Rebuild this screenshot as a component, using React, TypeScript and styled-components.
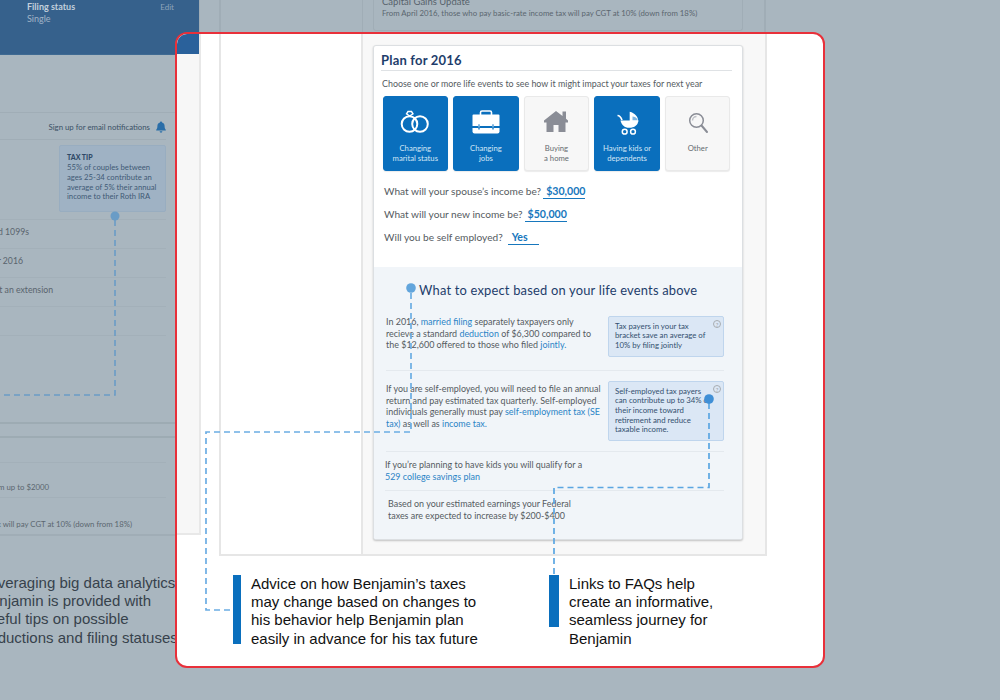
import React from "react";
import styled, { createGlobalStyle } from "styled-components";

const GlobalStyle = createGlobalStyle`
  html, body {
    margin: 0;
    padding: 0;
    background: #a9b6bf;
  }
  * {
    box-sizing: border-box;
  }
`;

const APP_FONT = `Lato, "Noto Sans", sans-serif`;
const SLIDE_FONT = `"Liberation Sans", Arial, sans-serif`;

function Rings() {
  return (
    <svg width="30" height="26" viewBox="0 0 30 26" fill="none" stroke="#fff">
      <circle cx="9.5" cy="14" r="7.8" strokeWidth="2" />
      <circle cx="20" cy="14" r="7.8" strokeWidth="2" />
      <path d="M6.5 3.8 L8 1.5 H11.5 L13 3.8 L9.7 6 Z" strokeWidth="1.4" />
    </svg>
  );
}

function Briefcase() {
  return (
    <svg width="30" height="26" viewBox="0 1 30 26">
      <path d="M9.5 6V3.5A1.5 1.5 0 0 1 11 2h8a1.5 1.5 0 0 1 1.5 1.5V6" fill="none" stroke="#fff" strokeWidth="1.6" />
      <path d="M2.5 5.5h25a1 1 0 0 1 1 1v10.5H1.5V6.5a1 1 0 0 1 1-1Z" fill="#fff" />
      <path d="M1.5 19h27v3.5a2 2 0 0 1-2 2h-23a2 2 0 0 1-2-2Z" fill="#fff" />
      <path d="M8 15.5v5M22 15.5v5" stroke="#0a6fbd" strokeWidth="1.3" />
      <path d="M8 15.5v3M22 15.5v3" stroke="#8fc0e6" strokeWidth="1.3" />
    </svg>
  );
}

function House() {
  return (
    <svg width="30" height="26" viewBox="0 2 30 26">
      <path
        d="M15 3 L21.5 8 V3.5 H25 V10.7 L27 12.5 V14.5 H24.5 V24 H17.5 V17 H12.5 V24 H5.5 V14.5 H3 V12.5 Z"
        fill="#8a8d96"
      />
    </svg>
  );
}

function Stroller() {
  return (
    <svg width="30" height="26" viewBox="0 0 30 26" fill="none">
      <path d="M5.5 5.5 C8 5.5 9 7.5 10 10" stroke="#fff" strokeWidth="1.7" />
      <path d="M17.7 1.7 C23 3 26.3 7 26.3 11.5 H17.7 Z" fill="#fff" />
      <path d="M20.5 6.5 C22.5 6.5 24.5 7.8 25.5 9.5 L25.8 10.6 H20.5 Z" fill="#7fb6e2" />
      <path d="M8.5 10.5 H26.3 C26.3 15 22.5 17.8 17 17.8 C12.5 17.8 9.5 15 8.5 10.5 Z" fill="#fff" />
      <circle cx="12.7" cy="21.7" r="2.4" stroke="#fff" strokeWidth="1.5" />
      <circle cx="21" cy="21.7" r="2.4" stroke="#fff" strokeWidth="1.5" />
    </svg>
  );
}

function Magnifier() {
  return (
    <svg width="30" height="26" viewBox="0 0 30 26" fill="none">
      <circle cx="13.5" cy="10.5" r="6.8" stroke="#8a8d96" strokeWidth="1.5" />
      <path d="M9.5 10.5a4 4 0 0 1 4-4" stroke="#bcbfc5" strokeWidth="1.5" />
      <path d="M18.5 15.5 L24 22" stroke="#8a8d96" strokeWidth="2" strokeLinecap="round" />
    </svg>
  );
}

function Bell() {
  return (
    <svg width="10" height="12" viewBox="0 0 10 12">
      <path d="M5 0.5c.6 0 1 .4 1 1 1.7.4 2.6 1.8 2.6 3.6 0 2 .4 2.8 1.2 3.7v.7H.2v-.7C1 7.9 1.4 7.1 1.4 5.1c0-1.8.9-3.2 2.6-3.6 0-.6.4-1 1-1Z" fill="#2a6ea8" />
      <path d="M3.6 10.3h2.8a1.4 1.4 0 0 1-2.8 0Z" fill="#2a6ea8" />
    </svg>
  );
}

function Connectors() {
  return (
    <ConnectorSvg width="1000" height="700" viewBox="0 0 1000 700" fill="none">
      <path d="M115 220V395H0" stroke="#6a9cc6" strokeWidth="1.6" strokeDasharray="6 4" />
      <circle cx="115" cy="216" r="4.5" fill="#6a9cc6" />
      <path d="M411 293V432H206V610H233" stroke="#6badE3" strokeWidth="1.7" strokeDasharray="6 4" />
      <circle cx="411" cy="288" r="4.8" fill="#62a5dc" />
      <path d="M709 403V487.5H554V575" stroke="#5ba6e2" strokeWidth="1.7" strokeDasharray="6 4" />
      <circle cx="709" cy="399" r="4.8" fill="#3f8fd6" />
    </ConnectorSvg>
  );
}

const tiles = [
  { label: ["Changing", "marital status"], active: true, icon: <Rings /> },
  { label: ["Changing", "jobs"], active: true, icon: <Briefcase /> },
  { label: ["Buying", "a home"], active: false, icon: <House /> },
  { label: ["Having kids or", "dependents"], active: true, icon: <Stroller /> },
  { label: ["Other"], active: false, icon: <Magnifier /> },
];

const questions = [
  { text: "What will your spouse\u2019s income be?", value: "$30,000" },
  { text: "What will your new income be?", value: "$50,000" },
  { text: "Will you be self employed?", value: "Yes", wide: true },
];

const dimRows = [
  { text: "Gather your W-2s and 1099s", inset: 137 },
  { text: "Review your income for 2016", inset: 143 },
  { text: "Decide whether to request an extension", inset: 113 },
  { text: "", inset: 0 },
  { text: "", inset: 0 },
];

export default function App() {
  return (
    <Page>
      <GlobalStyle />

      <Backdrop>
        <DimColumn>
          <DimPanel>
            <DimHeader>
              <DimHeaderText>
                <DimStatusTitle>Filing status</DimStatusTitle>
                <DimStatusValue>Single</DimStatusValue>
              </DimHeaderText>
              <DimEdit>Edit</DimEdit>
            </DimHeader>

            <DimCard>
              <DimNotify>
                Sign up for email notifications
                <Bell />
              </DimNotify>
              <DimTipRow>
                <DimTip>
                  <DimTipTitle>TAX TIP</DimTipTitle>
                  55% of couples between ages 25-34 contribute an average of 5%
                  their annual income to their Roth IRA
                </DimTip>
              </DimTipRow>
              {dimRows.map((row, i) => (
                <DimRow key={i} $inset={row.inset}>
                  <span>{row.text}</span>
                </DimRow>
              ))}
            </DimCard>

            <DimCardLower>
              <DimLowerRow $inset={0} $height={25} $bottom={5} />
              <DimLowerRow $inset={117} $height={35} $bottom={4}>
                <span>Contribute to your Roth IRA from up to $2000</span>
              </DimLowerRow>
              <DimLowerRow $inset={34} $height={38} $bottom={6} $last>
                <span>From April 2016, those who pay basic-rate tax will pay CGT at 10% (down from 18%)</span>
              </DimLowerRow>
            </DimCardLower>
          </DimPanel>

          <DimParagraph>
            Leveraging big data analytics,
            <br />
            Benjamin is provided with
            <br />
            useful tips on possible
            <br />
            deductions and filing statuses
          </DimParagraph>
        </DimColumn>

        <DimFrame>
          <DimFrameSide />
          <DimFrameMain>
            <DimUpdateCard>
              <DimUpdateTitle>Capital Gains Update</DimUpdateTitle>
              <DimUpdateText>
                From April 2016, those who pay basic-rate income tax will pay CGT at 10% (down from 18%)
              </DimUpdateText>
            </DimUpdateCard>
          </DimFrameMain>
        </DimFrame>
      </Backdrop>

      <Spotlight>
        <SpotlightTop>
          <LeftStrip>
            <StripHeader />
          </LeftStrip>

          <Frame>
            <FrameSide />
            <FrameMain>
              <Card>
                <PlanSection>
                  <PlanTitle>Plan for 2016</PlanTitle>
                  <PlanIntro>
                    Choose one or more life events to see how it might impact your taxes for next year
                  </PlanIntro>

                  <TileRow>
                    {tiles.map((tile) => (
                      <Tile key={tile.label.join(" ")} $active={tile.active}>
                        {tile.icon}
                        <TileLabel>
                          {tile.label.map((line) => (
                            <div key={line}>{line}</div>
                          ))}
                        </TileLabel>
                      </Tile>
                    ))}
                  </TileRow>

                  <QuestionList>
                    {questions.map((q) => (
                      <Question key={q.text}>
                        {q.text}
                        <Answer $wide={q.wide}>{q.value}</Answer>
                      </Question>
                    ))}
                  </QuestionList>
                </PlanSection>

                <ExpectSection>
                  <ExpectTitle>What to expect based on your life events above</ExpectTitle>

                  <ExpectRow $height={72} $top={17}>
                    <ExpectText>
                      In 2016, <InlineLink>married filing</InlineLink> separately taxpayers only
                      <br />
                      recieve a standard <InlineLink>deduction</InlineLink> of $6,300 compared to
                      <br />
                      the $12,600 offered to those who filed <InlineLink>jointly.</InlineLink>
                    </ExpectText>
                    <TipBox $height={41}>
                      <HelpGlyph>?</HelpGlyph>
                      Tax payers in your tax
                      <br />
                      bracket save an average of
                      <br />
                      10% by filing jointly
                    </TipBox>
                  </ExpectRow>

                  <ExpectRow $height={81} $top={10}>
                    <ExpectText $offset={2}>
                      If you are self-employed, you will need to file an annual
                      <br />
                      return and pay estimated tax quarterly. Self-employed
                      <br />
                      individuals generally must pay{" "}
                      <InlineLink>
                        self-employment tax (SE
                        <br />
                        tax)
                      </InlineLink>{" "}
                      as well as <InlineLink>income tax.</InlineLink>
                    </ExpectText>
                    <TipBox $height={60}>
                      <HelpGlyph>?</HelpGlyph>
                      Self-employed tax payers
                      <br />
                      can contribute up to 34% of
                      <br />
                      their income toward
                      <br />
                      retirement and reduce
                      <br />
                      taxable income.
                    </TipBox>
                  </ExpectRow>

                  <PlainRow>
                    If you&rsquo;re planning to have kids you will qualify for a
                    <br />
                    <InlineLink>529 college savings plan</InlineLink>
                  </PlainRow>

                  <EstimateText>
                    Based on your estimated earnings your Federal
                    <br />
                    taxes are expected to increase by $200-$400
                  </EstimateText>
                </ExpectSection>
              </Card>
            </FrameMain>
          </Frame>
        </SpotlightTop>

        <Notes>
          <Note>
            <NoteBar $height={69} $width={8} />
            <NoteText>
              Advice on how Benjamin&rsquo;s taxes
              <br />
              may change based on changes to
              <br />
              his behavior help Benjamin plan
              <br />
              easily in advance for his tax future
            </NoteText>
          </Note>
          <Note>
            <NoteBar $height={52} $width={10} />
            <NoteText>
              Links to FAQs help
              <br />
              create an informative,
              <br />
              seamless journey for
              <br />
              Benjamin
            </NoteText>
          </Note>
        </Notes>
      </Spotlight>

      <Connectors />
    </Page>
  );
}

const Page = styled.div`
  position: relative;
  width: 1000px;
  height: 700px;
  overflow: hidden;
  background: #a9b6bf;
  font-family: ${APP_FONT};
`;

const Backdrop = styled.div`
  display: flex;
  height: 100%;
`;

const DimColumn = styled.div`
  width: 200px;
  flex-shrink: 0;
`;

const DimPanel = styled.div`
  height: 536px;
  border-right: 1px solid #a0adb6;
  border-bottom: 2px solid #a0adb6;
`;

const DimHeader = styled.div`
  display: flex;
  justify-content: space-between;
  height: 55px;
  padding: 1px 25px 0 27px;
  background: #36618c;
  border-bottom: 1px solid #3f6a92;
`;

const DimHeaderText = styled.div`
  display: flex;
  flex-direction: column;
`;

const DimStatusTitle = styled.div`
  font-size: 9px;
  font-weight: 700;
  line-height: 12px;
  color: #c3d0dc;
`;

const DimStatusValue = styled.div`
  font-size: 9px;
  line-height: 12px;
  color: #a1b4c7;
`;

const DimEdit = styled.div`
  font-size: 8px;
  line-height: 12px;
  color: #8da4ba;
`;

const DimCard = styled.div`
  height: 312px;
  margin-top: 57px;
  padding-right: 33px;
  border-top: 1px solid #a0adb6;
  border-bottom: 2px solid #9dabb3;
`;

const DimNotify = styled.div`
  display: flex;
  justify-content: flex-end;
  align-items: center;
  gap: 6px;
  height: 27px;
  padding-top: 2px;
  font-size: 7.8px;
  color: #3b5166;
  border-bottom: 1px solid #a0adb6;
`;

const DimTipRow = styled.div`
  display: flex;
  justify-content: flex-end;
  height: 80px;
  padding-top: 5px;
  border-bottom: 1px solid #a3b0b9;
`;

const DimTip = styled.div`
  width: 107px;
  height: 67px;
  padding: 6px 7px;
  font-size: 7.7px;
  line-height: 9.8px;
  color: #3f5a76;
  background: #9fb2c4;
  border: 1px solid #98adc0;
  border-radius: 2px;
`;

const DimTipTitle = styled.div`
  font-weight: 900;
  font-size: 7px;
  line-height: 11px;
  color: #2f4a68;
`;

const DimRow = styled.div<{ $inset: number }>`
  display: flex;
  justify-content: flex-end;
  height: 29px;
  padding-right: ${(p) => p.$inset}px;
  padding-top: 5px;
  font-size: 8.7px;
  line-height: 14px;
  color: #59646d;
  white-space: nowrap;
  border-bottom: 1px solid #a3b0b9;

  &:last-child {
    border-bottom: none;
  }
`;

const DimCardLower = styled.div`
  margin-top: 12px;
  padding-right: 33px;
  border-top: 2px solid #9dabb3;
`;

const DimLowerRow = styled.div<{ $inset: number; $height: number; $bottom: number; $last?: boolean }>`
  display: flex;
  justify-content: flex-end;
  align-items: flex-end;
  height: ${(p) => p.$height}px;
  padding-right: ${(p) => p.$inset}px;
  padding-bottom: ${(p) => p.$bottom}px;
  font-size: 7.8px;
  line-height: 12px;
  color: #5b666f;
  white-space: nowrap;
  border-bottom: ${(p) => (p.$last ? "none" : "1px solid #a3b0b9")};
`;

const DimParagraph = styled.div`
  margin: 38px 0 0 -19px;
  font-family: ${SLIDE_FONT};
  font-size: 15px;
  line-height: 18.2px;
  color: #37424c;
  white-space: nowrap;
`;

const DimFrame = styled.div`
  display: flex;
  width: 547px;
  height: 32px;
  margin-left: 19px;
  border-left: 2px solid #a0adb6;
  border-right: 2px solid #a0adb6;
`;

const DimFrameSide = styled.div`
  width: 142px;
  border-right: 1px solid #a0adb6;
`;

const DimFrameMain = styled.div`
  flex: 1;
  padding-left: 10px;
`;

const DimUpdateCard = styled.div`
  display: flex;
  flex-direction: column;
  justify-content: flex-end;
  width: 370px;
  height: 31px;
  padding: 0 0 11px 8px;
  border: 1px solid #a0adb6;
  border-top: none;
  border-radius: 0 0 3px 3px;
`;

const DimUpdateTitle = styled.div`
  font-size: 9.5px;
  line-height: 12px;
  color: #57626b;
`;

const DimUpdateText = styled.div`
  font-size: 7.8px;
  line-height: 11px;
  color: #5b666f;
  white-space: nowrap;
`;

/* white cut-out with the red outline, sits over the dimmed slide */
const Spotlight = styled.div`
  position: absolute;
  left: 175px;
  top: 32px;
  width: 650px;
  height: 636px;
  background: #fff;
  border: 2px solid #e8303a;
  border-radius: 12px;
  overflow: hidden;
`;

const SpotlightTop = styled.div`
  display: flex;
  align-items: flex-start;
`;

const LeftStrip = styled.div`
  width: 24px;
  height: 501px;
  flex-shrink: 0;
  background: #f7f7f7;
  border-right: 2px solid #e8e8e8;
  border-bottom: 2px solid #e8e8e8;
`;

const StripHeader = styled.div`
  height: 20px;
  background: #2a619b;
`;

const Frame = styled.div`
  display: flex;
  width: 548px;
  height: 522px;
  margin-left: 18px;
  border-left: 2px solid #e6e6e6;
  border-right: 2px solid #e6e6e6;
  border-bottom: 2px solid #e6e6e6;
`;

const FrameSide = styled.div`
  width: 142px;
  flex-shrink: 0;
  background: #fff;
  border-right: 2px solid #e6e6e6;
`;

const FrameMain = styled.div`
  flex: 1;
  padding: 11px 0 0 10px;
  background: #f8f8f8;
`;

const Card = styled.div`
  width: 370px;
  height: 495px;
  overflow: hidden;
  background: #fff;
  border: 1px solid #dcdfe2;
  border-radius: 3px;
  box-shadow: 0 1px 2px rgba(0, 0, 0, 0.22);
`;

const PlanSection = styled.div`
  height: 221px;
  padding: 5px 10px 0 7px;
`;

const PlanTitle = styled.div`
  height: 20px;
  font-size: 13px;
  font-weight: 700;
  line-height: 18px;
  letter-spacing: 0.2px;
  color: #1e3d6b;
  border-bottom: 1px solid #dfe2e5;
`;

const PlanIntro = styled.div`
  margin: 6px 0 0 1px;
  font-size: 8.9px;
  line-height: 13px;
  color: #555b61;
  white-space: nowrap;
`;

const TileRow = styled.div`
  display: flex;
  gap: 5px;
  margin: 6px 0 0 1.5px;
`;

const Tile = styled.div<{ $active: boolean }>`
  display: flex;
  flex-direction: column;
  align-items: center;
  width: 65.6px;
  height: 74.5px;
  padding-top: 12.5px;
  border-radius: 3px;
  background: ${(p) => (p.$active ? "#0a6fbd" : "#f7f7f7")};
  border: 1px solid ${(p) => (p.$active ? "#0a6fbd" : "#e9e9e9")};
  color: ${(p) => (p.$active ? "#d3e6f5" : "#666b70")};
  box-shadow: 0 1px 1px rgba(0, 0, 0, 0.08);
`;

const TileLabel = styled.div`
  margin-top: 7px;
  font-size: 7.7px;
  line-height: 10px;
  text-align: center;
  white-space: nowrap;
`;

const QuestionList = styled.div`
  display: flex;
  flex-direction: column;
  gap: 8px;
  margin: 13px 0 0 3px;
`;

const Question = styled.div`
  display: flex;
  gap: 2px;
  font-size: 10.15px;
  line-height: 14px;
  color: #555b61;
`;

const Answer = styled.span<{ $wide?: boolean }>`
  min-width: ${(p) => (p.$wide ? "31px" : "auto")};
  margin-left: ${(p) => (p.$wide ? "3px" : "0")};
  padding: 0 ${(p) => (p.$wide ? "9px" : "0")} 0 ${(p) => (p.$wide ? "4px" : "3px")};
  font-size: 10.6px;
  font-weight: 700;
  color: #1777bd;
  border-bottom: 1px solid #1777bd;
`;

const ExpectSection = styled.div`
  height: 274px;
  padding: 14px 18px 0 12px;
  background: #f1f5f9;
`;

const ExpectTitle = styled.div`
  margin-left: 33px;
  font-size: 12.9px;
  line-height: 18px;
  letter-spacing: 0.2px;
  color: #1e3d6b;
  white-space: nowrap;
`;

const ExpectRow = styled.div<{ $height: number; $top: number }>`
  display: flex;
  justify-content: space-between;
  align-items: flex-start;
  height: ${(p) => p.$height}px;
  padding-top: ${(p) => p.$top}px;
  border-bottom: 1px solid #e4e9ee;
`;

const ExpectText = styled.div<{ $offset?: number }>`
  margin-top: ${(p) => p.$offset ?? 0}px;
  font-size: 8.95px;
  line-height: 11.7px;
  color: #555b61;
  white-space: nowrap;
`;

const InlineLink = styled.span`
  color: #2b84c6;
`;

const TipBox = styled.div<{ $height: number }>`
  position: relative;
  width: 116px;
  height: ${(p) => p.$height}px;
  padding: 4.5px 0 0 6px;
  font-size: 7.8px;
  line-height: 9.7px;
  color: #33506f;
  white-space: nowrap;
  background: #dbe7f5;
  border: 1px solid #bfd5ed;
  border-radius: 2px;
`;

const HelpGlyph = styled.span`
  position: absolute;
  top: 3px;
  right: 2px;
  width: 8px;
  height: 8px;
  font-size: 6px;
  line-height: 7px;
  text-align: center;
  color: #9aa0a6;
  border: 1px solid #a8adb2;
  border-radius: 50%;
`;

const PlainRow = styled.div`
  height: 38.5px;
  margin-left: -1px;
  padding-top: 7px;
  font-size: 8.95px;
  line-height: 11.7px;
  color: #555b61;
  white-space: nowrap;
  border-bottom: 1px solid #e4e9ee;
`;

const EstimateText = styled.div`
  padding: 7.5px 0 0 2px;
  font-size: 8.95px;
  line-height: 11.7px;
  color: #555b61;
  white-space: nowrap;
`;

const Notes = styled.div`
  display: flex;
  margin-top: 19px;
  padding-left: 56px;
`;

const Note = styled.div`
  display: flex;
  gap: 10px;
  width: 316px;
  flex-shrink: 0;
`;

const NoteBar = styled.div<{ $height: number; $width: number }>`
  width: ${(p) => p.$width}px;
  height: ${(p) => p.$height}px;
  flex-shrink: 0;
  background: #0a6fbd;
`;

const NoteText = styled.div`
  font-family: ${SLIDE_FONT};
  font-size: 15px;
  line-height: 18.2px;
  color: #111;
  white-space: nowrap;
`;

/* dashed leader lines running across the slide */
const ConnectorSvg = styled.svg`
  position: absolute;
  left: 0;
  top: 0;
  pointer-events: none;
`;
